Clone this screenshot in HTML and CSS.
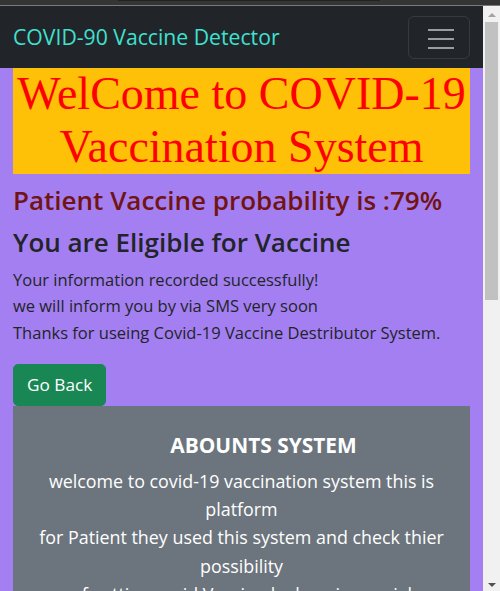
FILE: index.html
```
<!DOCTYPE html>
<html lang="en">
<head>
<meta charset="utf-8">
<title>COVID-90 Vaccine Detector</title>
<link rel="stylesheet" href="styles.css">
</head>
<body>
<div class="chrome"><div class="chrome-tab"></div></div>
<div class="viewport">
  <div class="page">
    <nav class="navbar">
      <span class="brand">COVID-90 Vaccine Detector</span>
      <button class="toggler" type="button" aria-label="Toggle navigation">
        <svg width="30" height="30" viewBox="0 0 30 30"><path d="M4 7h26M4 16h26M4 25h26" stroke="rgba(255,255,255,0.55)" stroke-width="2" stroke-linecap="butt"/></svg>
      </button>
    </nav>
    <main class="main">
      <h1 class="hero">WelCome to COVID-19 Vaccination System</h1>
      <h2 class="prob">Patient Vaccine probability is :79%</h2>
      <h2 class="elig">You are Eligible for Vaccine</h2>
      <p class="info">Your information recorded successfully!<br>we will inform you by via SMS very soon<br>Thanks for useing Covid-19 Vaccine Destributor System.</p>
      <button class="back" type="button">Go Back</button>
      <section class="about">
        <h3 class="about-title">ABOUNTS SYSTEM</h3>
        <p class="about-text">welcome to covid-19 vaccination system this is platform<br>for Patient they used this system and check thier possibility<br>of getting covid Vaccine by keeping social<br>distance and safety</p>
      </section>
    </main>
  </div>
  <div class="scrollbar">
    <div class="arrow-up"></div>
    <div class="track"><div class="thumb"></div></div>
    <div class="arrow-down"></div>
  </div>
</div>
</body>
</html>
```
FILE: styles.css
```
* { box-sizing: border-box; }
html, body { margin: 0; padding: 0; }
body {
  width: 500px;
  height: 591px;
  overflow: hidden;
  font-family: "Open Sans", "Noto Sans", sans-serif;
  background: #a47ff1;
  display: flex;
  flex-direction: column;
}
.chrome {
  height: 6px;
  background: #353535;
  border-bottom: 1px solid #7a7a7a;
  position: relative;
  flex: none;
}
.chrome-tab {
  position: absolute;
  left: 118px;
  top: 0;
  width: 262px;
  height: 1px;
  background: #222;
}
.viewport {
  flex: 1;
  display: flex;
  min-height: 0;
}
.page {
  width: 483px;
  flex: none;
  overflow: hidden;
  background: #a47ff1;
}
.navbar {
  height: 62px;
  background: #212529;
  display: flex;
  align-items: center;
  justify-content: space-between;
  padding: 0 13px;
}
.brand {
  color: #40e0d0;
  font-size: 21.2px;
  line-height: 30px;
}
.toggler {
  width: 62px;
  height: 43px;
  margin-top: 1px;
  background: transparent;
  border: 1px solid rgba(255,255,255,0.1);
  border-radius: 6px;
  display: flex;
  align-items: center;
  justify-content: center;
  padding: 0;
}
.toggler svg { display: block; width: 30px; height: 30px; }
.main {
  padding: 0 13px;
}
.hero {
  margin: 0;
  background: #ffc107;
  color: #f00;
  font-family: "Liberation Serif", "Times New Roman", serif;
  font-weight: 400;
  font-size: 46px;
  line-height: 52.8px;
  text-align: center;
}
.prob, .elig {
  font-size: 26px;
  font-weight: 600;
  line-height: 30.84px;
}
.prob { color: #701414; margin: 11px 0 0; }
.elig { color: #212529; margin: 11.5px 0 9.3px; }
.info {
  color: #212529;
  font-size: 16.5px;
  line-height: 26.4px;
  margin: 0 0 17.4px;
}
.back {
  display: block;
  background: #198754;
  color: #fff;
  border: 1px solid #198754;
  border-radius: 5px;
  font-family: inherit;
  font-size: 17.2px;
  line-height: 30px;
  padding: 5px 13px;
  height: 42px;
}
.about {
  background: #6c757d;
  color: #fff;
  text-align: center;
  padding: 27.6px 12px 0;
  height: 400px;
}
.about-title {
  margin: 0 0 9.4px;
  padding-left: 44px;
  font-size: 20.9px;
  font-weight: 700;
  line-height: 24px;
}
.about-text {
  margin: 0;
  font-size: 17.86px;
  line-height: 28.4px;
}
.scrollbar {
  width: 17px;
  flex: none;
  background: #f1f1f1;
  display: flex;
  flex-direction: column;
  align-items: center;
}
.arrow-up {
  margin-top: 7px;
  width: 0; height: 0;
  border-left: 4px solid transparent;
  border-right: 4px solid transparent;
  border-bottom: 4px solid #a3a3a3;
}
.track {
  flex: 1;
  width: 100%;
  padding: 5px 2px 0;
}
.thumb {
  height: 278px;
  background: #c1c1c1;
}
.arrow-down {
  margin-bottom: 4px;
  width: 0; height: 0;
  border-left: 4px solid transparent;
  border-right: 4px solid transparent;
  border-top: 4px solid #505050;
}
```
